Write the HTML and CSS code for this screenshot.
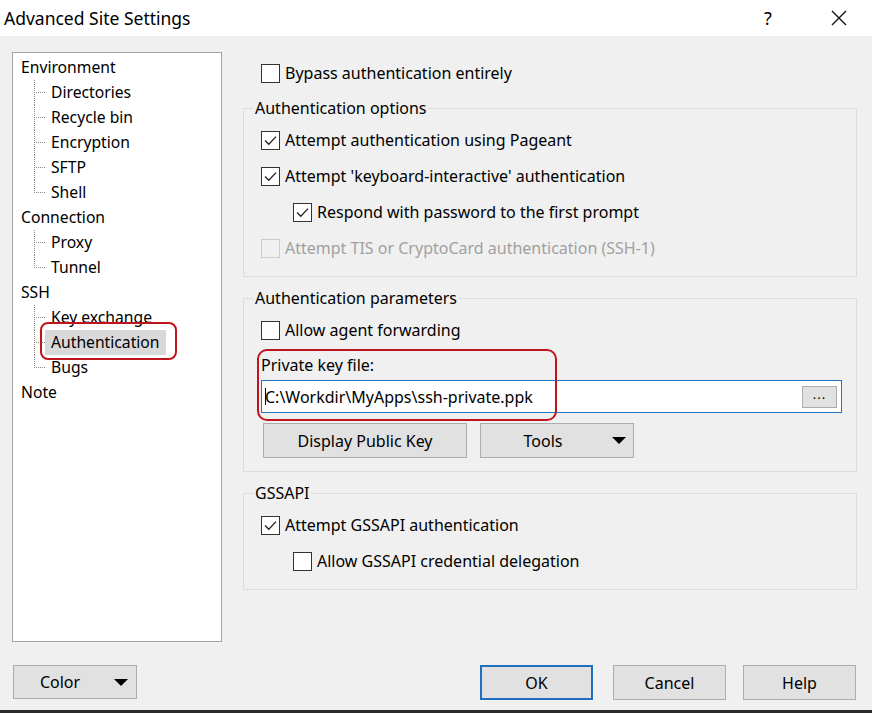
FILE: index.html
```html
<!DOCTYPE html>
<html lang="en">
<head>
<meta charset="utf-8">
<title>Advanced Site Settings</title>
<link rel="stylesheet" href="styles.css">
</head>
<body>
<div class="window">
  <header class="titlebar">
    <span class="title">Advanced Site Settings</span>
    <span class="help">?</span>
    <span class="close">
      <svg width="16" height="16" viewBox="0 0 16 16"><path d="M1 1 L15 15 M15 1 L1 15" stroke="#111" stroke-width="1.4" fill="none"/></svg>
    </span>
  </header>

  <div class="content">
    <nav class="tree">
      <ul class="tree-root">
        <li><span class="label">Environment</span>
          <ul class="children">
            <li><span class="label">Directories</span></li>
            <li><span class="label">Recycle bin</span></li>
            <li><span class="label">Encryption</span></li>
            <li><span class="label">SFTP</span></li>
            <li><span class="label">Shell</span></li>
          </ul>
        </li>
        <li><span class="label">Connection</span>
          <ul class="children">
            <li><span class="label">Proxy</span></li>
            <li><span class="label">Tunnel</span></li>
          </ul>
        </li>
        <li><span class="label">SSH</span>
          <ul class="children">
            <li><span class="label">Key exchange</span></li>
            <li><span class="label selected">Authentication</span></li>
            <li><span class="label">Bugs</span></li>
          </ul>
        </li>
        <li><span class="label">Note</span></li>
      </ul>
    </nav>

    <section class="pane">
      <div class="check top-check"><span class="box"></span><span>Bypass authentication entirely</span></div>

      <fieldset class="group g-options">
        <legend>Authentication options</legend>
        <div class="check"><span class="box checked"><svg viewBox="0 0 17 17"><polyline points="3,8.5 6.8,12.3 14,4.6"/></svg></span><span>Attempt authentication using Pageant</span></div>
        <div class="check"><span class="box checked"><svg viewBox="0 0 17 17"><polyline points="3,8.5 6.8,12.3 14,4.6"/></svg></span><span>Attempt 'keyboard-interactive' authentication</span></div>
        <div class="check indent"><span class="box checked"><svg viewBox="0 0 17 17"><polyline points="3,8.5 6.8,12.3 14,4.6"/></svg></span><span>Respond with password to the first prompt</span></div>
        <div class="check disabled"><span class="box"></span><span>Attempt TIS or CryptoCard authentication (SSH-1)</span></div>
      </fieldset>

      <fieldset class="group g-params">
        <legend>Authentication parameters</legend>
        <div class="check"><span class="box"></span><span>Allow agent forwarding</span></div>
        <div class="keyfile">
          <div class="field-label">Private key file:</div>
          <div class="input">
            <span class="value"><span class="caret"></span>C:\Workdir\MyApps\ssh-private.ppk</span>
            <span class="browse">...</span>
          </div>
          <span class="annot annot-key"></span>
        </div>
        <div class="btn-row">
          <span class="btn btn-display">Display Public Key</span>
          <span class="btn btn-drop btn-tools"><span class="btn-text">Tools</span><span class="arrow"></span></span>
        </div>
      </fieldset>

      <fieldset class="group g-gss">
        <legend>GSSAPI</legend>
        <div class="check"><span class="box checked"><svg viewBox="0 0 17 17"><polyline points="3,8.5 6.8,12.3 14,4.6"/></svg></span><span>Attempt GSSAPI authentication</span></div>
        <div class="check indent"><span class="box"></span><span>Allow GSSAPI credential delegation</span></div>
      </fieldset>
    </section>
  </div>

  <footer class="footer">
    <span class="btn btn-drop btn-color"><span class="btn-text">Color</span><span class="arrow"></span></span>
    <span class="spacer"></span>
    <span class="btn btn-ok">OK</span>
    <span class="btn btn-cancel">Cancel</span>
    <span class="btn btn-help">Help</span>
  </footer>
  <div class="bottom-edge"></div>
</div>
</body>
</html>
```

FILE: styles.css
```css
* { box-sizing: border-box; }

html, body {
  margin: 0;
  padding: 0;
}

body {
  width: 872px;
  height: 713px;
  overflow: hidden;
  background: #f0f0f0;
  font-family: "Noto Sans", "Open Sans", sans-serif;
  font-size: 16px;
  color: #000;
}

.window {
  display: flex;
  flex-direction: column;
  height: 713px;
}

/* title bar */
.titlebar {
  height: 36px;
  background: #fff;
  display: flex;
  align-items: center;
  padding: 0 21px 0 4px;
}
.title {
  flex: 1;
  font-size: 17.5px;
  color: #000;
}
.help {
  width: 20px;
  text-align: center;
  font-size: 18px;
}
.close {
  width: 24px;
  margin-left: 49px;
  display: flex;
  justify-content: center;
}

/* main area */
.content {
  display: flex;
  padding: 16px 15px 0 12px;
}

.tree {
  width: 210px;
  height: 590px;
  background: #fff;
  border: 1px solid #a3a3a3;
  padding: 2px 0 0 2px;
  font-size: 15.7px;
}
.tree ul {
  list-style: none;
  margin: 0;
  padding: 0;
}
.tree .label {
  display: inline-block;
  line-height: 25px;
  height: 25px;
  padding: 0 6px;
  white-space: nowrap;
}
.tree .children {
  padding-left: 30px;
}
.tree .children li {
  position: relative;
}
.tree .children li::before {
  content: "";
  position: absolute;
  left: -11px;
  top: 12px;
  width: 11px;
  border-top: 1px dotted #8a8a8a;
}
.tree .children li::after {
  content: "";
  position: absolute;
  left: -11px;
  top: 0;
  height: 25px;
  border-left: 1px dotted #8a8a8a;
}
.tree .children li:last-child::after {
  height: 13px;
}
.tree .label.selected {
  background: #d9d9d9;
  position: relative;
}
.tree .label.selected::after {
  content: "";
  position: absolute;
  left: -5px;
  top: -8px;
  right: -11px;
  bottom: -5px;
  border: 2px solid #c0141c;
  border-radius: 8px;
}

/* right pane */
.pane {
  margin-left: 21px;
  width: 614px;
  display: flex;
  flex-direction: column;
}

.check {
  display: flex;
  align-items: center;
  height: 36px;
  padding-left: 17px;
  white-space: nowrap;
}
.top-check {
  margin-top: 3px;
  padding-left: 18px;
}
.check.indent {
  padding-left: 49px;
}
.box {
  width: 19px;
  height: 19px;
  border: 1px solid #333;
  background: #fff;
  margin-right: 5px;
  flex: none;
  display: flex;
}
.box svg {
  width: 17px;
  height: 17px;
}
.box polyline {
  fill: none;
  stroke: #222;
  stroke-width: 1.3;
}
.check.disabled {
  color: #a0a0a0;
}
.check.disabled .box {
  border-color: #cccccc;
  background: #f0f0f0;
}

.group {
  margin: 11px 0 0 0;
  border: 1px solid #dcdcdc;
  padding: 4px 13px 10px 0;
  min-width: 0;
}
.g-options {
  margin-top: 7px;
}
.g-params {
  padding-bottom: 13px;
}
.group legend {
  margin-left: 9px;
  padding: 0 2px;
  line-height: 20px;
  height: 20px;
}

.keyfile {
  position: relative;
  margin: 7px 0 0 17px;
}
.field-label {
  line-height: 20px;
}
.input {
  margin-top: 5px;
  height: 33px;
  width: 581px;
  background: #fff;
  border: 1px solid #1f76c2;
  display: flex;
  align-items: center;
  padding: 0 4px 0 3px;
}
.value {
  flex: 1;
  display: flex;
  align-items: center;
  white-space: nowrap;
}
.caret {
  width: 1px;
  height: 17px;
  background: #000;
  margin-right: -1px;
}
.browse {
  width: 35px;
  height: 22px;
  background: #e1e1e1;
  border: 1px solid #adadad;
  font-size: 13px;
  line-height: 14px;
  text-align: center;
  letter-spacing: 1px;
}
.annot-key {
  position: absolute;
  left: -4px;
  top: -6px;
  width: 300px;
  height: 72px;
  border: 2px solid #c0141c;
  border-radius: 10px;
}

.btn-row {
  display: flex;
  margin: 10px 0 0 19px;
}

.btn {
  display: flex;
  align-items: center;
  justify-content: center;
  height: 35px;
  background: #e1e1e1;
  border: 1px solid #adadad;
  white-space: nowrap;
}
.btn-display {
  width: 204px;
}
.btn-tools {
  width: 154px;
  margin-left: 13px;
}
.btn-drop .btn-text {
  flex: 1;
  text-align: center;
}
.btn-drop .arrow {
  width: 28px;
  display: flex;
  justify-content: center;
}
.btn-drop .arrow::before {
  content: "";
  border-left: 7px solid transparent;
  border-right: 7px solid transparent;
  border-top: 7px solid #000;
}

/* footer */
.footer {
  display: flex;
  margin-top: 23px;
  padding: 0 16px 0 13px;
  height: 35px;
}
.btn-color {
  width: 124px;
  height: 34px;
}
.btn-color .arrow {
  width: 30px;
}
.spacer {
  flex: 1;
}
.btn-ok, .btn-cancel, .btn-help {
  width: 113px;
}
.btn-ok {
  border: 2px solid #1f6fbf;
}
.btn-cancel {
  margin-left: 20px;
}
.btn-help {
  margin-left: 17px;
}

.bottom-edge {
  margin-top: 10px;
  height: 3px;
  background: #2b2b2b;
}
```
